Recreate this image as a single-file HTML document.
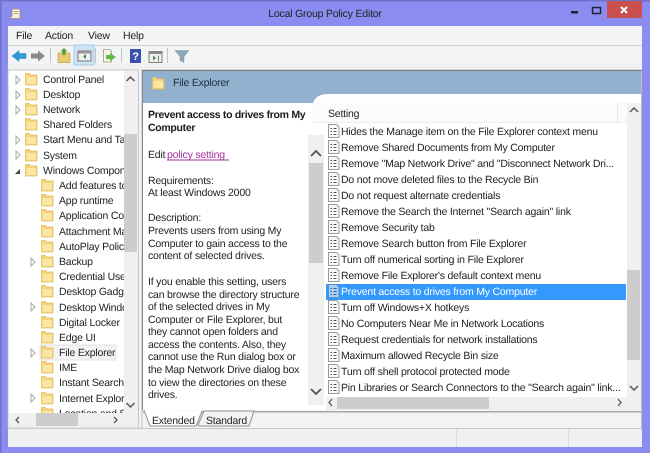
<!DOCTYPE html>
<html><head><meta charset="utf-8"><style>
html,body{margin:0;padding:0;background:#8b8cf0;width:650px;height:453px;overflow:hidden}
svg{display:block}
text{font-family:"Liberation Sans",sans-serif;font-size:10.5px;letter-spacing:-.2px;fill:#222;text-rendering:geometricPrecision}
.b{font-weight:bold;fill:#1a1a1a;letter-spacing:-.3px}
</style></head><body>
<svg width="650" height="453" viewBox="0 0 650 453" style="filter:blur(.35px)">
<defs>
<g id="f"><path d="M0.5 1.500h4l1 1.500h6.500v10h-11.500z" fill="#f5d478" stroke="#e0bd62" stroke-width=".8"/><rect x="1.500" y="5" width="9.500" height="7" fill="#fbe6a4"/></g>
<g id="i"><path d="M.5.5h8l2.500 2.500v10.500h-10.500z" fill="#fbfbfb" stroke="#999"/><path d="M2.500 4.500h1.500M2.500 7.500h1.500M2.500 10.500h1.500M5.500 4.500h3M5.500 7.500h3M5.500 10.500h3" stroke="#555" stroke-width="1"/></g>
<path id="a" d="M0 0l4 4-4 4z" fill="#fff" stroke="#a8a8a8"/>
<path id="u" d="M0 4l4-4 4 4" fill="none" stroke="#555" stroke-width="1.500"/>
<path id="d" d="M0 0l4 4 4-4" fill="none" stroke="#555" stroke-width="1.500"/>
</defs>
<rect width="650" height="453" fill="#8b8cf0"/>
<rect x="0" y="0" width="650" height="1.500" fill="#6f70c8"/>
<rect x="0" y="0" width="1.500" height="453" fill="#6f70c8"/>
<!-- title -->
<path d="M12 9h8v9.500h-9.500v-2h1.500z" fill="#f4eedd" stroke="#9a8f70" stroke-width=".8"/>
<path d="M13.500 11.500h5M13.500 13.500h5" stroke="#a09870" stroke-width=".8"/>
<text x="325" y="17" text-anchor="middle">Local Group Policy Editor</text>
<rect x="571" y="11" width="7" height="2.500" fill="#1f2233"/>
<rect x="592.500" y="7.500" width="8" height="6" fill="none" stroke="#20243a" stroke-width="1.500"/>
<rect x="607" y="1" width="35" height="17" fill="#c9504f"/>
<path d="M621 7l6 6M627 7l-6 6" stroke="#fff" stroke-width="2"/>
<!-- client -->
<rect x="8" y="26" width="634" height="421" fill="#f3f4f6"/>
<rect x="8" y="45" width="634" height="1" fill="#d0d0d0"/>
<rect x="8" y="64" width="634" height="6" fill="#f0f0f0"/>
<text x="16" y="39">File</text><text x="45" y="39">Action</text><text x="88" y="39">View</text><text x="123" y="39">Help</text>
<!-- toolbar -->
<path d="M12 56l7-5.500v3h7v5h-7v3z" fill="#2e9ad8" stroke="#2a80c0" stroke-width=".5"/>
<path d="M45 56l-7-5.500v3h-7v5h7v3z" fill="#8a8a8a"/>
<rect x="50" y="48" width="1" height="15" fill="#c4c4c4"/>
<rect x="58" y="53" width="12" height="9.500" fill="#e8ca70" stroke="#c0a050" stroke-width=".7"/>
<path d="M64 48l3.500 3.500h-2v3.500h-3v-3.500h-2z" fill="#5a9a3a"/>
<rect x="74" y="45" width="20" height="20" fill="#cde4f7" stroke="#a8cce8"/>
<rect x="78" y="51" width="13" height="10" fill="#f0f0f0" stroke="#787878"/>
<rect x="78" y="51" width="13" height="2.500" fill="#999"/>
<path d="M86 54l-3 2.500 3 2.500z" fill="#3a8a5a"/>
<rect x="95" y="48" width="1" height="15" fill="#c4c4c4"/>
<path d="M103.500 49.500h6l2 2v10.500h-8z" fill="#f6f3e0" stroke="#9a9a80" stroke-width=".8"/>
<path d="M110 53l6 4-6 4v-2h-4v-4h4z" fill="#68b848"/>
<rect x="121" y="48" width="1" height="15" fill="#c4c4c4"/>
<rect x="130" y="49" width="11" height="14" fill="#3a50b0"/>
<text x="135.500" y="60" text-anchor="middle" style="font-size:11px;font-weight:bold;fill:#fff">?</text>
<rect x="149" y="51.500" width="13" height="11" fill="#f0f0ea" stroke="#808080"/>
<rect x="149" y="51.500" width="13" height="2.500" fill="#888"/>
<path d="M153 55.500l3 2.500-3 2.500z" fill="#3a8a5a"/>
<path d="M158.500 55.500v6" stroke="#777"/>
<rect x="167" y="48" width="1" height="15" fill="#c4c4c4"/>
<path d="M175 50.500h14l-5 6v6l-4-2v-4z" fill="#8ca8b8" stroke="#7a98a8" stroke-width=".5"/>
<!-- tree -->
<rect x="8" y="70" width="130.500" height="358" fill="#fff" stroke="#b8b8b8" stroke-width=".8"/>
<rect x="124" y="71" width="14" height="342" fill="#f0f0f0"/>
<rect x="124" y="134" width="13" height="118" fill="#cdcdcd"/>
<use href="#u" x="126.500" y="77"/>
<use href="#d" x="126.500" y="403"/>
<rect x="9" y="413" width="129" height="14" fill="#f0f0f0"/>
<rect x="36" y="413" width="42" height="13" fill="#cdcdcd"/>
<path d="M19 417l-3 3 3 3M114 417l3 3-3 3" fill="none" stroke="#555" stroke-width="1.300"/>
<svg x="9" y="71" width="115" height="342" viewBox="9 71 115 342">
<rect x="40" y="345" width="76" height="15" fill="#f3f3f3" stroke="#dcdcdc" stroke-width=".8"/>
<use href="#a" x="16" y="76"/><use href="#f" x="25" y="72"/><text x="43" y="83">Control Panel</text>
<use href="#a" x="16" y="91"/><use href="#f" x="25" y="87"/><text x="43" y="98">Desktop</text>
<use href="#a" x="16" y="106"/><use href="#f" x="25" y="102"/><text x="43" y="113">Network</text>
<use href="#f" x="25" y="117"/><text x="43" y="128">Shared Folders</text>
<use href="#a" x="16" y="136"/><use href="#f" x="25" y="132"/><text x="43" y="143">Start Menu and Task</text>
<use href="#a" x="16" y="151"/><use href="#f" x="25" y="148"/><text x="43" y="159">System</text>
<path d="M15 174l5-5v5z" fill="#444"/><use href="#f" x="25" y="163"/><text x="43" y="174">Windows Components</text>
<use href="#f" x="41" y="178"/><text x="59" y="189">Add features to</text>
<use href="#f" x="41" y="193"/><text x="59" y="204">App runtime</text>
<use href="#f" x="41" y="208"/><text x="59" y="219">Application Com</text>
<use href="#f" x="41" y="224"/><text x="59" y="235">Attachment Ma</text>
<use href="#f" x="41" y="239"/><text x="59" y="250">AutoPlay Policies</text>
<use href="#a" x="31" y="258"/><use href="#f" x="41" y="254"/><text x="59" y="265">Backup</text>
<use href="#f" x="41" y="269"/><text x="59" y="280">Credential User</text>
<use href="#f" x="41" y="284"/><text x="59" y="295">Desktop Gadgets</text>
<use href="#a" x="31" y="303"/><use href="#f" x="41" y="300"/><text x="59" y="311">Desktop Window</text>
<use href="#f" x="41" y="315"/><text x="59" y="326">Digital Locker</text>
<use href="#f" x="41" y="330"/><text x="59" y="341">Edge UI</text>
<use href="#a" x="31" y="349"/><use href="#f" x="41" y="345"/><text x="59" y="356">File Explorer</text>
<use href="#f" x="41" y="360"/><text x="59" y="371">IME</text>
<use href="#f" x="41" y="375"/><text x="59" y="386">Instant Search</text>
<use href="#a" x="31" y="394"/><use href="#f" x="41" y="391"/><text x="59" y="402">Internet Explorer</text>
<use href="#f" x="41" y="406"/><text x="59" y="417">Location and Sensors</text>
</svg>
<!-- right pane -->
<rect x="142" y="70" width="499.500" height="358" fill="#fff" stroke="#b0b0b0" stroke-width=".8"/>
<rect x="142" y="70" width="1.500" height="340" fill="#888"/>
<rect x="142" y="70" width="499.500" height="1.500" fill="#7a7a7a"/>
<rect x="143" y="71" width="498" height="32" fill="#92b1cf"/>
<use href="#f" x="152" y="76"/>
<text x="173" y="86" style="fill:#1e2a3a">File Explorer</text>
<rect x="143" y="103" width="170" height="307" fill="#fff"/>
<path d="M312 110q0-16 16-16h313v16z" fill="#fff"/>
<rect x="312" y="108" width="329" height="302" fill="#fff"/>
<rect x="313" y="103" width="314" height="20" fill="#fbfbfb"/>
<rect x="313" y="122" width="314" height="1" fill="#eeeeee"/>
<rect x="617" y="103" width="1" height="20" fill="#e4e4e4"/>
<!-- description -->
<text class="b" x="148" y="118">Prevent access to drives from My</text>
<text class="b" x="148" y="131">Computer</text>
<text x="148" y="158">Edit</text>
<text x="167" y="158" style="fill:#a02fa0">policy setting</text>
<rect x="167" y="159.500" width="62" height="1" fill="#a02fa0"/>
<text x="148" y="184">Requirements:</text>
<text x="148" y="196">At least Windows 2000</text>
<text x="148" y="221">Description:</text>
<text x="148" y="234">Prevents users from using My</text>
<text x="148" y="247">Computer to gain access to the</text>
<text x="148" y="259">content of selected drives.</text>
<text x="148" y="285">If you enable this setting, users</text>
<text x="148" y="298">can browse the directory structure</text>
<text x="148" y="310">of the selected drives in My</text>
<text x="148" y="323">Computer or File Explorer, but</text>
<text x="148" y="335">they cannot open folders and</text>
<text x="148" y="348">access the contents. Also, they</text>
<text x="148" y="360">cannot use the Run dialog box or</text>
<text x="148" y="373">the Map Network Drive dialog box</text>
<text x="148" y="386">to view the directories on these</text>
<text x="148" y="398">drives.</text>
<rect x="308" y="135" width="16" height="270" fill="#f0f0f0"/>
<rect x="309" y="163" width="14" height="100" fill="#cdcdcd"/>
<path d="M311 156l5-5 5 5M311 389l5 5 5-5" fill="none" stroke="#555" stroke-width="1.800"/>
<!-- list -->
<text x="328" y="117">Setting</text>
<rect x="326" y="284" width="300" height="16" fill="#3399ff"/>
<g id="rows">
<use href="#i" x="328" y="124"/><text x="341" y="135">Hides the Manage item on the File Explorer context menu</text>
<use href="#i" x="328" y="140"/><text x="341" y="151">Remove Shared Documents from My Computer</text>
<use href="#i" x="328" y="156"/><text x="341" y="167">Remove "Map Network Drive" and "Disconnect Network Dri...</text>
<use href="#i" x="328" y="172"/><text x="341" y="183">Do not move deleted files to the Recycle Bin</text>
<use href="#i" x="328" y="188"/><text x="341" y="199">Do not request alternate credentials</text>
<use href="#i" x="328" y="204"/><text x="341" y="215">Remove the Search the Internet "Search again" link</text>
<use href="#i" x="328" y="220"/><text x="341" y="231">Remove Security tab</text>
<use href="#i" x="328" y="236"/><text x="341" y="247">Remove Search button from File Explorer</text>
<use href="#i" x="328" y="252"/><text x="341" y="263">Turn off numerical sorting in File Explorer</text>
<use href="#i" x="328" y="268"/><text x="341" y="279">Remove File Explorer's default context menu</text>
<path d="M328.500 284.500h8l2.500 2.500v10.500h-10.500z" fill="#a8d0f5" stroke="#5a8ec8"/><path d="M330.500 288.500h1.500M330.500 291.500h1.500M330.500 294.500h1.500M333.500 288.500h3M333.500 291.500h3M333.500 294.500h3" stroke="#2a60a8"/>
<text x="341" y="295" style="fill:#fff">Prevent access to drives from My Computer</text>
<use href="#i" x="328" y="300"/><text x="341" y="311">Turn off Windows+X hotkeys</text>
<use href="#i" x="328" y="316"/><text x="341" y="327">No Computers Near Me in Network Locations</text>
<use href="#i" x="328" y="332"/><text x="341" y="343">Request credentials for network installations</text>
<use href="#i" x="328" y="348"/><text x="341" y="359">Maximum allowed Recycle Bin size</text>
<use href="#i" x="328" y="364"/><text x="341" y="375">Turn off shell protocol protected mode</text>
<use href="#i" x="328" y="380"/><text x="341" y="391">Pin Libraries or Search Connectors to the "Search again" link...</text>
</g>
<rect x="627" y="103" width="14" height="294" fill="#f0f0f0"/>
<rect x="627" y="270" width="13" height="90" fill="#cdcdcd"/>
<use href="#u" x="630" y="108"/>
<use href="#d" x="630" y="386"/>
<rect x="326" y="397" width="315" height="13" fill="#f0f0f0"/>
<rect x="337" y="397" width="152" height="12" fill="#cdcdcd"/>
<path d="M332 399l-3 3.500 3 3.500M618 399l3 3.500-3 3.500" fill="none" stroke="#555" stroke-width="1.300"/>
<!-- tabs -->
<rect x="143" y="410" width="498" height="18" fill="#f3f3f3"/>
<rect x="143" y="411" width="498" height="1.500" fill="#a8a8a8"/>
<path d="M144 410l6 16h46l6-15" fill="#fff" stroke="#909090"/>
<path d="M198 425l6-14h50l-5 15h-50z" fill="#f3f3f3" stroke="#909090"/>
<text x="152" y="424">Extended</text>
<text x="206" y="424">Standard</text>
<!-- status -->
<rect x="8" y="428" width="634" height="19" fill="#eef0f2"/>
<rect x="8" y="428" width="634" height="1" fill="#c8c8c8"/>
<rect x="456" y="429" width="1" height="18" fill="#dcdcdc"/>
<rect x="568" y="429" width="1" height="18" fill="#dcdcdc"/>
</svg>
</body></html>
